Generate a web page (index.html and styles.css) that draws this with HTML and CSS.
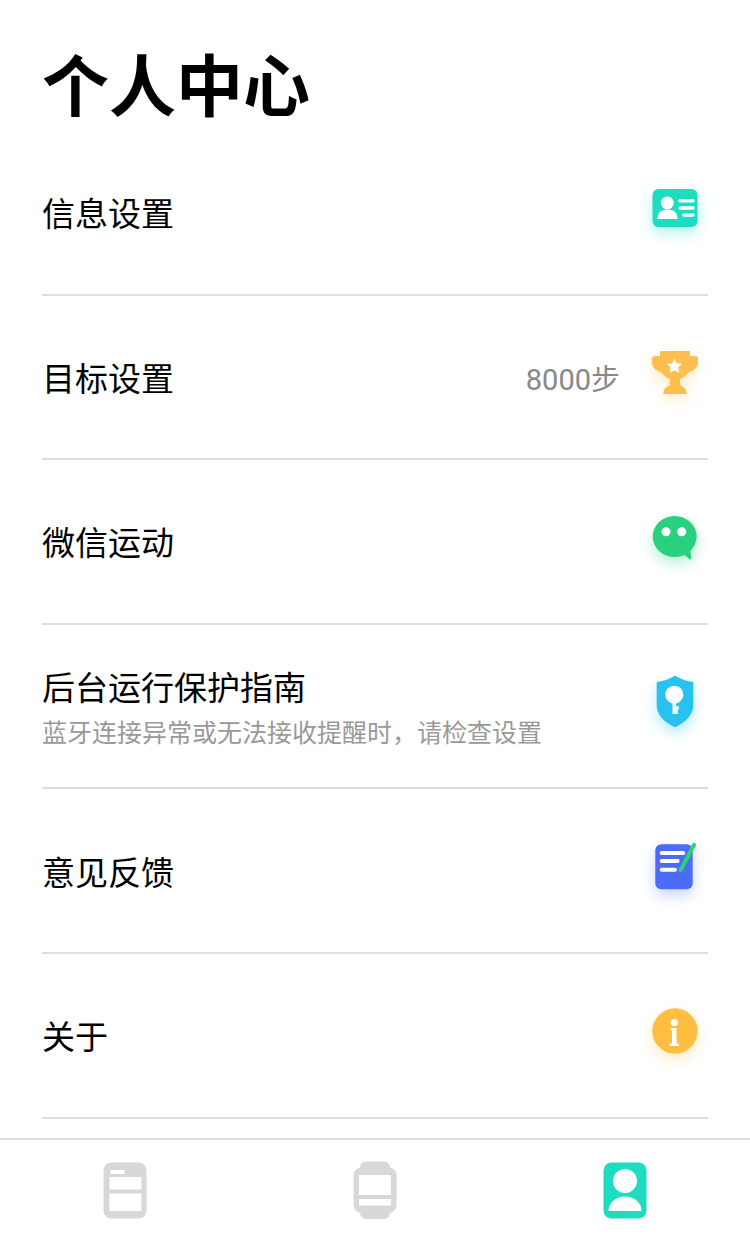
FILE: index.html
```html
<!DOCTYPE html>
<html lang="zh-CN">
  <head>
    <meta charset="utf-8">
    <title>个人中心</title>
    <link rel="stylesheet" href="styles.css">
  </head>
  <body>
    <div class="page">
      <h1 class="title">个人中心</h1>

      <div class="row">
        <div class="row-text"><div class="row-label">信息设置</div></div>
        <svg class="row-icon glow-teal" viewBox="0 0 46 46">
          <rect x="0.5" y="4" width="45" height="38" rx="6" fill="#1edcc0"/>
          <circle cx="15.3" cy="18" r="6.5" fill="#fff"/>
          <path d="M5.5 34c0-6 3-9.500 10-9.500s10 3.500 10 9.500z" fill="#fff"/>
          <path d="M28 15.700h13M28 23h13M32 30h9" stroke="#fff" stroke-width="3.500" stroke-linecap="round"/>
        </svg>
      </div>

      <div class="row">
        <div class="row-text"><div class="row-label">目标设置</div></div>
        <span class="row-value">8000步</span>
        <svg class="row-icon glow-orange" viewBox="0 0 46 46">
          <path d="M8 1H38V6H43Q46 6 46 9V12C46 18 41 21 36.500 22.500C34 26 31 28 28 29V34C28 36 32 37 33.500 39L35 44H11L12.500 39C14 37 18 36 18 34V29C15 28 12 26 9.500 22.500C5 21 0 18 0 12V9Q0 6 3 6H8Z" fill="#ffbe4d"/>
          <path d="M22.500 8.500l2.300 4.800 5.200.7-3.800 3.600 1 5.200-4.700-2.500-4.700 2.500 1-5.200L15 14l5.200-.7z" fill="#fff"/>
        </svg>
      </div>

      <div class="row">
        <div class="row-text"><div class="row-label">微信运动</div></div>
        <svg class="row-icon glow-green" viewBox="0 0 46 46">
          <ellipse cx="22.700" cy="22.500" rx="22" ry="20.500" fill="#28d080"/>
          <path d="M30 39L38 45.500Q39.500 46 39.300 44L38 34z" fill="#28d080"/>
          <circle cx="14" cy="17.700" r="4.500" fill="#fff"/>
          <circle cx="29.700" cy="17.700" r="4.500" fill="#fff"/>
        </svg>
      </div>

      <div class="row">
        <div class="row-text">
          <div class="row-label">后台运行保护指南</div>
          <div class="row-sub">蓝牙连接异常或无法接收提醒时，请检查设置</div>
        </div>
        <svg class="row-icon glow-blue" viewBox="0 0 46 46">
          <path d="M23-3.300C29 0 35 2.500 41.300 3v23c0 11-9.300 18-18.300 22.300C14 44 4.700 37 4.700 26V3C11 2.500 17 0 23-3.300z" fill="#29c1ee"/>
          <circle cx="22.300" cy="15.700" r="9" fill="#fff"/>
          <path d="M22.300 20v15M22.300 29h4.500M22.300 33h3.500" stroke="#fff" stroke-width="3.500" fill="none"/>
        </svg>
      </div>

      <div class="row">
        <div class="row-text"><div class="row-label">意见反馈</div></div>
        <svg class="row-icon glow-indigo" viewBox="0 0 46 46">
          <rect x="3.300" y="0.300" width="37.400" height="45" rx="6" fill="#4a6cf7"/>
          <path d="M9.700 9h21.600M9.700 17h15.900M9.700 25.700H23" stroke="#fff" stroke-width="4" stroke-linecap="round"/>
          <path d="M28.700 26L42 1" stroke="#2bd46f" stroke-width="4" stroke-linecap="round"/>
        </svg>
      </div>

      <div class="row">
        <div class="row-text"><div class="row-label">关于</div></div>
        <svg class="row-icon glow-orange" viewBox="0 0 46 46">
          <circle cx="23" cy="23" r="22.700" fill="#ffbe3f"/>
          <circle cx="22.300" cy="14.600" r="3.700" fill="#fff"/>
          <path d="M18.500 20h6v15.500h2.500v2.500H17.500v-2.500H20V22.500h-1.500z" fill="#fff"/>
        </svg>
      </div>
    </div>

    <div class="tabbar">
      <div class="tab">
        <svg class="tab-icon" viewBox="0 0 44 58">
          <rect x="0.500" y="1.500" width="43" height="56" rx="8" fill="#d8d8d8"/>
          <rect x="6.500" y="16" width="32" height="12.500" fill="#fff"/>
          <rect x="6.500" y="32.500" width="32" height="17.500" fill="#fff"/>
          <rect x="7.500" y="9" width="14" height="4" fill="#fff"/>
        </svg>
      </div>
      <div class="tab">
        <svg class="tab-icon" viewBox="0 0 44 58">
          <rect x="0.500" y="6.500" width="43" height="45.500" rx="8" fill="#d8d8d8"/>
          <rect x="7" y="0.500" width="30" height="57.500" rx="6" fill="#d8d8d8"/>
          <rect x="6" y="14" width="32" height="20" fill="#fff"/>
          <rect x="6" y="38" width="32" height="6.500" fill="#fff"/>
        </svg>
      </div>
      <div class="tab">
        <svg class="tab-icon" viewBox="0 0 44 58">
          <rect x="0.500" y="1.500" width="43" height="56" rx="8" fill="#1edcc0"/>
          <circle cx="22" cy="20" r="12" fill="#fff"/>
          <path d="M5.500 50c0-8 7-14.500 16.500-14.500S38.500 42 38.500 50z" fill="#fff"/>
        </svg>
      </div>
    </div>
  </body>
</html>
```

FILE: styles.css
```css
* {
  box-sizing: border-box;
}

html,
body {
  margin: 0;
  padding: 0;
  background: #fff;
}

body {
  width: 750px;
  height: 1242px;
  overflow: hidden;
  display: flex;
  flex-direction: column;
  color: #000;
  font-family: "Noto Sans CJK SC", "Noto Sans", sans-serif;
}

.page {
  flex: 1;
  padding: 0 42px;
}

.title {
  height: 131px;
  margin: 0;
  padding-top: 34px;
  font-size: 67px;
  line-height: 96px;
  font-weight: 700;
}

.row {
  height: 164.6px;
  display: flex;
  align-items: center;
  border-bottom: 2px solid #ddd;
}

.row-text {
  flex: 1;
}

.row-label {
  font-size: 33px;
  line-height: 44px;
}

.row-sub {
  margin: 7px 0 2px;
  font-size: 25px;
  line-height: 32px;
  color: #999;
}

.row-value {
  margin-right: 32px;
  font-family: Roboto, "Noto Sans CJK SC", sans-serif;
  font-size: 29px;
  color: #888;
}

.row-icon {
  width: 46px;
  height: 46px;
  margin: 0 10px 8px 0;
  overflow: visible;
}

.glow-teal {
  filter: drop-shadow(0 6px 7px rgba(30, 220, 192, 0.35));
}

.glow-orange {
  filter: drop-shadow(0 6px 7px rgba(255, 190, 70, 0.3));
}

.glow-green {
  filter: drop-shadow(0 6px 7px rgba(43, 212, 130, 0.35));
}

.glow-blue {
  filter: drop-shadow(0 6px 7px rgba(41, 193, 238, 0.35));
}

.glow-indigo {
  filter: drop-shadow(0 6px 7px rgba(74, 108, 247, 0.3));
}

.tabbar {
  height: 104px;
  flex: none;
  display: flex;
  padding-top: 21px;
  border-top: 2px solid #ddd;
}

.tab {
  flex: 1;
  display: flex;
  justify-content: center;
}

.tab-icon {
  width: 44px;
  height: 58px;
}
```
